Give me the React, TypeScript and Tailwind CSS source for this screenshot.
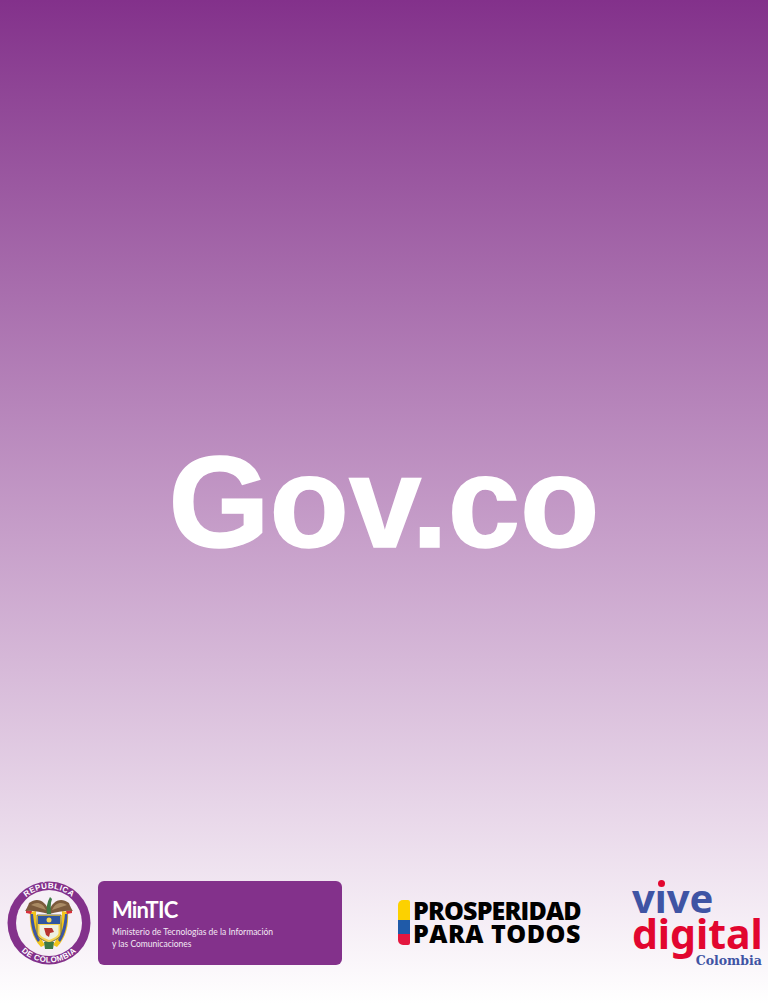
function Seal() {
  return (
    <svg viewBox="0 0 84 84" className="h-[84px] w-[84px] shrink-0">
      <circle cx="42" cy="42" r="41.5" fill="#83318b" />
      <circle cx="42" cy="42" r="33" fill="#f6eff6" />
      <defs>
        <path id="seal-top" d="M 7.5 42 A 34.5 34.5 0 0 1 76.5 42" />
        <path id="seal-bottom" d="M 2.5 42 A 39.5 39.5 0 0 0 81.5 42" />
      </defs>
      <text fill="#fff" fontSize="8" fontWeight="700" letterSpacing="0.4" fontFamily="'Liberation Sans', sans-serif" textAnchor="middle">
        <textPath href="#seal-top" startOffset="50%">REPÚBLICA</textPath>
      </text>
      <text fill="#fff" fontSize="8" fontWeight="700" letterSpacing="0.4" fontFamily="'Liberation Sans', sans-serif" textAnchor="middle">
        <textPath href="#seal-bottom" startOffset="50%">DE COLOMBIA</textPath>
      </text>
      {/* flags */}
      <path d="M29 30 L23 31 C22 44 25 57 34 66 L38 64 C32 56 29 44 29 30Z" fill="#f2c51c" />
      <path d="M55 30 L61 31 C62 44 59 57 50 66 L46 64 C52 56 55 44 55 30Z" fill="#f2c51c" />
      <path d="M26 33 L23.5 33 C23.5 44 26 54 31 61 L33 59 C29 52 27 44 26 33Z" fill="#3c56a5" />
      <path d="M58 33 L60.5 33 C60.5 44 58 54 53 61 L51 59 C55 52 57 44 58 33Z" fill="#3c56a5" />
      <path d="M19 29 l6 1 -1 3 -5 -1z M65 29 l-6 1 1 3 5 -1z" fill="#d8303c" />
      {/* eagle */}
      <path d="M42 30 C39 21 31 15 22 22 C21 25 19 29 18 30 C24 29 34 31 42 33 C50 31 60 29 66 30 C65 29 63 25 62 22 C53 15 45 21 42 30Z" fill="#7b5a3c" />
      <path d="M24 24 C30 20 36 22 39 29 C34 27 29 26 24 24Z M60 24 C54 20 48 22 45 29 C50 27 55 26 60 24Z" fill="#a98a63" />
      <path d="M40 33 C39 27 40 21 43 16 L45 18 C43 23 44 28 44 33Z" fill="#3e7a45" />
      {/* shield */}
      <path d="M30 34 H54 V52 C54 57 48 59 42 62 C36 59 30 57 30 52Z" fill="#f4d452" stroke="#5c5a3a" strokeWidth="0.8" />
      <rect x="31" y="35" width="22" height="8" fill="#2f55a0" />
      <circle cx="42" cy="39" r="2.5" fill="#f4d452" />
      <path d="M32.5 44 H51.5 V52 C51.5 55 47 57 42 59 C37 57 32.5 55 32.5 52Z" fill="#eef0e2" />
      <path d="M37 47 h8 l2 4 -4 1 -1 4 -3 -2z" fill="#b8332f" />
      <path d="M37 61 h10 l-1 7 h-8z" fill="#3e7a45" />
    </svg>
  );
}

function MinticCard() {
  return (
    <div className="flex h-[84px] w-[244px] shrink-0 flex-col rounded-[6px] bg-[#83318b] pl-[14px] pt-[16px] font-['Lato',sans-serif] text-white">
      <div className="text-[22px] font-bold leading-[26px] tracking-[-0.8px]">MinTIC</div>
      <div className="mt-[3px] text-[8.5px] leading-[12px] text-[#f3e9f4]">
        Ministerio de Tecnologías de la Información
        <br />y las Comunicaciones
      </div>
    </div>
  );
}

function Prosperidad() {
  return (
    <div className="flex h-[45px] items-center gap-[3px]">
      <div className="flex h-[45px] w-[12px] flex-col overflow-hidden rounded-l-[5px] rounded-r-[2px]">
        <div className="h-[20px] bg-[#fcd100]" />
        <div className="h-[14px] bg-[#1f5aa8]" />
        <div className="h-[11px] bg-[#e4173f]" />
      </div>
      <div className="pb-[2px] font-['Open_Sans',sans-serif] text-[25px] font-extrabold leading-[23px] text-black">
        <div className="tracking-[-0.85px]">PROSPERIDAD</div>
        <div className="tracking-[0.5px]">PARA TODOS</div>
      </div>
    </div>
  );
}

function ViveDigital() {
  return (
    <div className="h-[87px] w-[130px] pt-[2px] font-['Noto_Sans',sans-serif] font-bold">
      <div className="text-[40px] leading-[36px] text-[#3f54a4]">
        v<span className="relative">ı<span className="absolute left-[3px] top-[10px] h-[7px] w-[7px] rounded-full bg-[#e2062f]" /></span>ve
      </div>
      <div className="text-[41px] leading-[34px] text-[#e2062f]">digital</div>
      <div className="mt-[4px] text-right font-['DejaVu_Serif',serif] text-[12.5px] leading-[14px] text-[#3f54a4]">Colombia</div>
    </div>
  );
}

export default function App() {
  return (
    <div className="flex h-[1004px] flex-col bg-gradient-to-b from-[#83318b] to-white">
      <main className="flex flex-1 items-center justify-center pt-[123px]">
        <h1 className="font-['Liberation_Sans',Arial,sans-serif] text-[130px] font-bold leading-none text-white [-webkit-text-stroke:1.5px_white]">Gov.co</h1>
      </main>
      <footer className="flex items-start pb-[39px] pl-[7px]">
        <Seal />
        <div className="ml-[7px]">
          <MinticCard />
        </div>
        <div className="ml-[56px] mt-[19px]">
          <Prosperidad />
        </div>
        <div className="ml-[51px] mt-[-3px]">
          <ViveDigital />
        </div>
      </footer>
    </div>
  );
}
